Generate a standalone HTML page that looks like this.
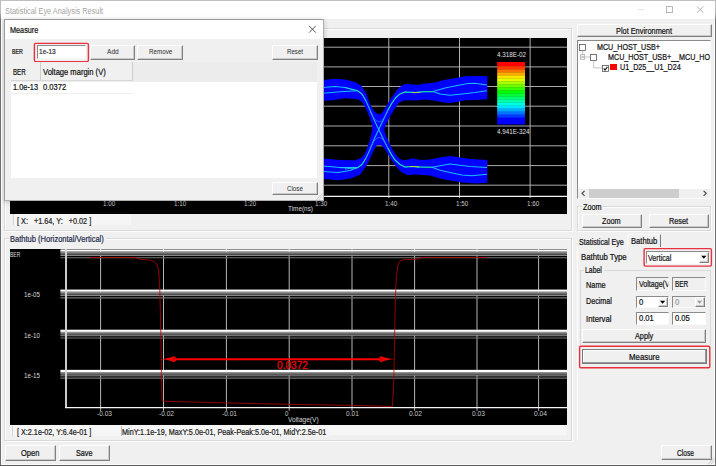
<!DOCTYPE html>
<html lang="en"><head><meta charset="utf-8"><title>Statistical Eye Analysis Result</title>
<style>
html,body{margin:0;padding:0;background:#f0f0f0;}
#win{position:relative;width:716px;height:466px;overflow:hidden;background:#f0f0f0;font-family:"Liberation Sans",sans-serif;}
.a{position:absolute;box-sizing:border-box;}
svg.a{overflow:visible;}
.t{position:absolute;white-space:nowrap;line-height:1;transform-origin:0 50%;-webkit-text-stroke:0.22px currentColor;}
.btn{background:#f0f0f0;border-top:1px solid #fff;border-left:1px solid #fff;border-right:1px solid #808080;border-bottom:1px solid #808080;box-shadow:inset -1px -1px 0 #cbcbcb;}
.dflt{border:1px solid #7a7a7a;box-shadow:inset -1px -1px 0 #9a9a9a, inset 1px 1px 0 #fff;}
.sunk{border-top:1px solid #8a8a8a;border-left:1px solid #8a8a8a;border-right:1px solid #fbfbfb;border-bottom:1px solid #fbfbfb;}
.grp{border:1px solid #d9d9d9;box-shadow:inset 1px 1px 0 #fcfcfc, 1px 1px 0 #fcfcfc;}
.dlg{background:#f0f0f0;border:1px solid #9c9c9c;border-right-color:#b0b0b0;border-bottom-color:#b0b0b0;box-shadow:0 1px 5px rgba(0,0,0,0.22);}
</style></head>
<body><div id="win">
<div class="a" style="left:0.00px;top:0.00px;width:716.00px;height:19.00px;background:#fff"></div>
<span class="t" id="t0" style="left:5.20px;top:5.51px;font-size:9.60px;color:#a4a4a4;transform:scaleX(0.7665);-webkit-text-stroke:0;">Statistical Eye Analysis Result</span>
<svg class="a" style="left:630px;top:0" width="86" height="20" viewBox="630 0 86 20"><line x1="637.5" y1="9.6" x2="644" y2="9.6" stroke="#e2e2e2" stroke-width="0.9"/><rect x="666.6" y="6.6" width="6" height="6" fill="none" stroke="#a8a8a8" stroke-width="0.8"/><path d="M697 6.4 L703.4 12.8 M703.4 6.4 L697 12.8" stroke="#a0a0a0" stroke-width="0.8" fill="none"/></svg>
<div class="a grp" style="left:4.00px;top:28.00px;width:568.00px;height:203.00px;"></div>
<svg class="a" style="left:10px;top:38px" width="557" height="176" viewBox="10 38 557 176"><rect x="10" y="38" width="557" height="176" fill="#000"/><line x1="60" y1="47.20" x2="567" y2="47.20" stroke="#bdbdbd" stroke-width="0.9"/><line x1="60" y1="66.90" x2="567" y2="66.90" stroke="#bdbdbd" stroke-width="0.9"/><line x1="60" y1="86.50" x2="567" y2="86.50" stroke="#bdbdbd" stroke-width="0.9"/><line x1="60" y1="106.20" x2="567" y2="106.20" stroke="#bdbdbd" stroke-width="0.9"/><line x1="60" y1="126.00" x2="567" y2="126.00" stroke="#bdbdbd" stroke-width="0.9"/><line x1="60" y1="145.80" x2="567" y2="145.80" stroke="#bdbdbd" stroke-width="0.9"/><line x1="60" y1="165.60" x2="567" y2="165.60" stroke="#bdbdbd" stroke-width="0.9"/><line x1="60" y1="185.20" x2="567" y2="185.20" stroke="#bdbdbd" stroke-width="0.9"/><line x1="106.40" y1="38" x2="106.40" y2="198" stroke="#c4c4c4" stroke-width="0.9"/><line x1="177.00" y1="38" x2="177.00" y2="198" stroke="#c4c4c4" stroke-width="0.9"/><line x1="247.60" y1="38" x2="247.60" y2="198" stroke="#c4c4c4" stroke-width="0.9"/><line x1="318.20" y1="38" x2="318.20" y2="198" stroke="#c4c4c4" stroke-width="0.9"/><line x1="388.80" y1="38" x2="388.80" y2="198" stroke="#c4c4c4" stroke-width="0.9"/><line x1="459.50" y1="38" x2="459.50" y2="198" stroke="#c4c4c4" stroke-width="0.9"/><line x1="530.10" y1="38" x2="530.10" y2="198" stroke="#c4c4c4" stroke-width="0.9"/><line x1="60" y1="196.3" x2="567" y2="196.3" stroke="#f4f4f4" stroke-width="1.2"/><line x1="65.5" y1="38" x2="65.5" y2="197" stroke="#f4f4f4" stroke-width="1.4"/><path d="M300.0 80.3 L323.0 80.0 L336.0 78.8 L345.0 79.4 L355.0 82.0 L361.5 85.7 L366.5 93.9 L370.0 104.0 L374.0 111.0 L377.0 113.6 L379.2 114.3 L381.5 113.4 L384.0 110.0 L389.0 101.4 L394.0 94.0 L399.0 87.6 L402.0 85.6 L405.0 84.0 L411.3 84.2 L416.4 85.0 L425.0 83.6 L435.0 82.6 L444.0 80.0 L454.0 78.2 L465.4 76.3 L475.5 76.0 L487.3 76.3 L487.3 99.2 L475.5 100.0 L465.4 100.2 L456.6 102.0 L450.3 103.0 L444.0 102.5 L435.2 100.8 L425.2 99.6 L416.4 100.4 L408.8 100.2 L403.0 100.6 L398.5 103.3 L394.0 110.0 L389.5 117.5 L385.6 125.5 L384.3 129.5 L385.4 134.3 L388.6 141.8 L393.0 150.6 L398.0 157.6 L402.5 160.3 L406.3 159.9 L412.6 158.2 L420.0 159.9 L430.0 159.5 L440.0 157.6 L450.3 156.1 L460.4 157.6 L470.4 159.1 L487.3 159.9 L487.3 182.8 L475.5 183.4 L463.0 182.5 L450.3 180.5 L440.0 178.4 L430.0 175.5 L415.0 174.4 L407.5 175.3 L400.5 171.4 L395.5 165.7 L390.4 158.2 L385.4 150.0 L382.3 145.8 L379.2 144.4 L376.6 145.6 L374.0 150.0 L370.3 158.2 L366.5 165.7 L360.3 174.5 L351.4 178.3 L339.0 180.2 L323.0 179.0 L300.0 179.0 L300.0 158.2 L323.0 158.2 L339.0 160.0 L355.0 160.3 L361.0 158.0 L364.0 155.0 L366.3 150.5 L369.3 142.0 L372.3 129.5 L372.3 125.0 L368.5 114.5 L364.8 106.3 L361.5 101.4 L358.0 99.3 L345.0 98.3 L332.6 100.2 L323.0 100.8 L300.0 100.8 Z" fill="#0000ff"/><polyline points="300.0,88.0 323.0,87.6 335.0,86.5 345.0,87.5 357.7,90.8" fill="none" stroke="#1cbcff" stroke-width="1.05" stroke-opacity="1.00" stroke-linejoin="round"/><polyline points="300.0,94.0 323.0,93.3 340.0,91.8 357.7,90.8" fill="none" stroke="#1cbcff" stroke-width="1.05" stroke-opacity="1.00" stroke-linejoin="round"/><polyline points="357.7,90.8 362.0,94.0 366.0,101.0 370.0,110.0 374.0,119.5 378.7,129.5 383.0,138.5 387.0,146.5 391.0,154.0 395.0,160.0 400.0,164.5 405.0,167.0 412.0,166.4 420.0,167.0 432.0,167.3" fill="none" stroke="#1cbcff" stroke-width="1.05" stroke-opacity="1.00" stroke-linejoin="round"/><polyline points="357.7,167.6 362.0,164.5 366.0,158.0 370.0,149.5 374.0,139.5 378.7,129.5 383.0,120.5 387.0,112.0 391.0,104.5 395.0,98.5 400.0,93.9 405.0,92.0 416.0,92.6 425.0,91.6 433.0,91.6" fill="none" stroke="#1cbcff" stroke-width="1.05" stroke-opacity="1.00" stroke-linejoin="round"/><polyline points="300.0,166.0 323.0,166.1 340.0,167.6 357.7,167.6" fill="none" stroke="#1cbcff" stroke-width="1.05" stroke-opacity="1.00" stroke-linejoin="round"/><polyline points="300.0,171.6 323.0,171.4 338.0,172.6 350.0,170.5 357.7,167.6" fill="none" stroke="#1cbcff" stroke-width="1.05" stroke-opacity="1.00" stroke-linejoin="round"/><polyline points="370.0,112.0 374.0,118.5 377.0,121.2 379.2,121.8 381.5,121.0 384.0,118.0 388.0,111.0" fill="none" stroke="#2f7dff" stroke-width="0.80" stroke-opacity="1.00" stroke-linejoin="round"/><polyline points="370.0,148.0 374.0,141.0 377.0,138.2 379.2,137.5 381.5,138.2 384.0,141.0 388.0,148.0" fill="none" stroke="#2f7dff" stroke-width="0.80" stroke-opacity="1.00" stroke-linejoin="round"/><polyline points="433.0,91.6 444.0,88.2 456.0,85.7 468.0,83.6 475.0,83.3 487.0,85.0" fill="none" stroke="#1cbcff" stroke-width="1.05" stroke-opacity="1.00" stroke-linejoin="round"/><polyline points="433.0,91.6 440.0,93.9 450.0,95.2 462.0,93.9 475.0,92.6 487.0,90.8" fill="none" stroke="#1cbcff" stroke-width="1.05" stroke-opacity="1.00" stroke-linejoin="round"/><polyline points="432.0,167.3 440.0,165.8 450.0,163.9 460.0,165.2 470.0,166.4 487.0,167.4" fill="none" stroke="#1cbcff" stroke-width="1.05" stroke-opacity="1.00" stroke-linejoin="round"/><polyline points="432.0,167.3 440.0,170.2 450.0,172.5 462.0,175.0 472.0,175.8 487.0,174.2" fill="none" stroke="#1cbcff" stroke-width="1.05" stroke-opacity="1.00" stroke-linejoin="round"/><polyline points="388.0,110.0 391.0,104.5 395.0,98.5 400.0,93.9 405.0,92.0 416.0,92.6 425.0,91.6 433.0,91.6" fill="none" stroke="#19e08a" stroke-width="0.90" stroke-opacity="1.00" stroke-linejoin="round"/><polyline points="412.0,92.4 416.0,92.6 420.0,92.2" fill="none" stroke="#c8e030" stroke-width="0.80" stroke-opacity="1.00" stroke-linejoin="round"/><polyline points="388.0,148.0 391.0,154.0 395.0,160.0 400.0,164.5 405.0,167.0 412.0,166.4 420.0,167.0 432.0,167.3" fill="none" stroke="#19e08a" stroke-width="0.90" stroke-opacity="1.00" stroke-linejoin="round"/><polyline points="410.0,166.5 414.0,166.5 419.0,167.0" fill="none" stroke="#c8e030" stroke-width="0.80" stroke-opacity="1.00" stroke-linejoin="round"/><polyline points="345.0,87.5 357.7,90.8 362.0,94.0 366.0,101.0" fill="none" stroke="#19e0b0" stroke-width="0.80" stroke-opacity="1.00" stroke-linejoin="round"/><polyline points="345.0,169.0 357.7,167.6 362.0,164.5 366.0,158.0" fill="none" stroke="#19e0b0" stroke-width="0.80" stroke-opacity="1.00" stroke-linejoin="round"/><rect x="497.2" y="62.00" width="27.8" height="4.70" fill="rgb(255,0,0)"/><rect x="497.2" y="66.40" width="27.8" height="3.31" fill="rgb(255,59,0)"/><rect x="497.2" y="69.41" width="27.8" height="3.31" fill="rgb(255,115,0)"/><rect x="497.2" y="72.42" width="27.8" height="3.31" fill="rgb(255,172,0)"/><rect x="497.2" y="75.44" width="27.8" height="3.31" fill="rgb(255,228,0)"/><rect x="497.2" y="78.45" width="27.8" height="3.31" fill="rgb(225,255,0)"/><rect x="497.2" y="81.46" width="27.8" height="3.31" fill="rgb(168,255,0)"/><rect x="497.2" y="84.47" width="27.8" height="3.31" fill="rgb(112,255,0)"/><rect x="497.2" y="87.48" width="27.8" height="3.31" fill="rgb(56,255,0)"/><rect x="497.2" y="90.49" width="27.8" height="3.31" fill="rgb(0,255,0)"/><rect x="497.2" y="93.51" width="27.8" height="3.31" fill="rgb(0,255,56)"/><rect x="497.2" y="96.52" width="27.8" height="3.31" fill="rgb(0,255,112)"/><rect x="497.2" y="99.53" width="27.8" height="3.31" fill="rgb(0,255,168)"/><rect x="497.2" y="102.54" width="27.8" height="3.31" fill="rgb(0,255,225)"/><rect x="497.2" y="105.55" width="27.8" height="3.31" fill="rgb(0,228,255)"/><rect x="497.2" y="108.56" width="27.8" height="3.31" fill="rgb(0,172,255)"/><rect x="497.2" y="111.58" width="27.8" height="3.31" fill="rgb(0,115,255)"/><rect x="497.2" y="114.59" width="27.8" height="3.31" fill="rgb(0,59,255)"/><rect x="497.2" y="117.60" width="27.8" height="6.90" fill="rgb(0,0,255)"/></svg>
<span class="t" id="t1" style="left:102.90px;top:200.62px;font-size:6.70px;color:#c6c6c6;transform:scaleX(0.9362);-webkit-text-stroke:0;">1:00</span>
<span class="t" id="t2" style="left:173.90px;top:200.62px;font-size:6.70px;color:#c6c6c6;transform:scaleX(0.9362);-webkit-text-stroke:0;">1:10</span>
<span class="t" id="t3" style="left:244.20px;top:200.62px;font-size:6.70px;color:#c6c6c6;transform:scaleX(0.9362);-webkit-text-stroke:0;">1:20</span>
<span class="t" id="t4" style="left:314.90px;top:200.62px;font-size:6.70px;color:#c6c6c6;transform:scaleX(0.9362);-webkit-text-stroke:0;">1:30</span>
<span class="t" id="t5" style="left:385.40px;top:200.62px;font-size:6.70px;color:#c6c6c6;transform:scaleX(0.9362);-webkit-text-stroke:0;">1:40</span>
<span class="t" id="t6" style="left:455.90px;top:200.62px;font-size:6.70px;color:#c6c6c6;transform:scaleX(0.9362);-webkit-text-stroke:0;">1:50</span>
<span class="t" id="t7" style="left:526.90px;top:200.62px;font-size:6.70px;color:#c6c6c6;transform:scaleX(0.9362);-webkit-text-stroke:0;">1:60</span>
<span class="t" id="t8" style="left:288.40px;top:204.96px;font-size:7.20px;color:#d8d8d8;transform:scaleX(0.8899);-webkit-text-stroke:0;">Time(ns)</span>
<span class="t" id="t9" style="left:497.20px;top:51.66px;font-size:6.80px;color:#e2e2e2;transform:scaleX(0.9243);-webkit-text-stroke:0;">4.318E-02</span>
<span class="t" id="t10" style="left:497.20px;top:129.36px;font-size:6.80px;color:#e2e2e2;transform:scaleX(0.9216);-webkit-text-stroke:0;">4.941E-324</span>
<div class="a" style="left:12.60px;top:214.00px;width:118.40px;height:10.60px;background:#f5f5f5;border-left:1px solid #d4d4d4;"></div>
<span class="t" id="t11" style="left:17.00px;top:216.93px;font-size:8.60px;color:#222;transform:scaleX(0.8456);white-space:pre;">[ X:   +1.64, Y:   +0.02 ]</span>
<div class="a grp" style="left:4.00px;top:238.00px;width:568.00px;height:203.00px;"></div>
<div class="a" style="left:8.50px;top:233.00px;width:97.50px;height:12.00px;background:#f0f0f0"></div>
<span class="t" id="t12" style="left:10.20px;top:234.92px;font-size:8.80px;color:#1c2a4a;transform:scaleX(0.8564);">Bathtub (Horizontal/Vertical)</span>
<svg class="a" style="left:10px;top:249px" width="557" height="176" viewBox="10 249 557 176"><defs><linearGradient id="bg" x1="0" y1="0" x2="0" y2="1"><stop offset="0" stop-color="#a0a0a0"/><stop offset="1" stop-color="#3c3c3c"/></linearGradient></defs><rect x="10" y="249" width="557" height="176" fill="#000"/><line x1="100.60" y1="249" x2="100.60" y2="410.8" stroke="#cacaca" stroke-width="0.9"/><line x1="163.50" y1="249" x2="163.50" y2="410.8" stroke="#cacaca" stroke-width="0.9"/><line x1="226.40" y1="249" x2="226.40" y2="410.8" stroke="#cacaca" stroke-width="0.9"/><line x1="289.20" y1="249" x2="289.20" y2="410.8" stroke="#cacaca" stroke-width="0.9"/><line x1="352.00" y1="249" x2="352.00" y2="410.8" stroke="#cacaca" stroke-width="0.9"/><line x1="414.60" y1="249" x2="414.60" y2="410.8" stroke="#cacaca" stroke-width="0.9"/><line x1="477.00" y1="249" x2="477.00" y2="410.8" stroke="#cacaca" stroke-width="0.9"/><line x1="538.60" y1="249" x2="538.60" y2="410.8" stroke="#cacaca" stroke-width="0.9"/><rect x="60.4" y="249.45" width="506.6" height="2.2" fill="#fff"/><rect x="60.4" y="251.65" width="506.6" height="3.3" fill="url(#bg)"/><line x1="60.4" y1="255.45" x2="567" y2="255.45" stroke="#929292" stroke-width="1"/><line x1="60.4" y1="257.75" x2="567" y2="257.75" stroke="#747474" stroke-width="1.2"/><rect x="60.4" y="289.58" width="506.6" height="2.2" fill="#fff"/><rect x="60.4" y="291.78" width="506.6" height="3.3" fill="url(#bg)"/><line x1="60.4" y1="295.58" x2="567" y2="295.58" stroke="#929292" stroke-width="1"/><line x1="60.4" y1="297.88" x2="567" y2="297.88" stroke="#747474" stroke-width="1.2"/><rect x="60.4" y="329.71" width="506.6" height="2.2" fill="#fff"/><rect x="60.4" y="331.91" width="506.6" height="3.3" fill="url(#bg)"/><line x1="60.4" y1="335.71" x2="567" y2="335.71" stroke="#929292" stroke-width="1"/><line x1="60.4" y1="338.01" x2="567" y2="338.01" stroke="#747474" stroke-width="1.2"/><rect x="60.4" y="369.84" width="506.6" height="2.2" fill="#fff"/><rect x="60.4" y="372.04" width="506.6" height="3.3" fill="url(#bg)"/><line x1="60.4" y1="375.84" x2="567" y2="375.84" stroke="#929292" stroke-width="1"/><line x1="60.4" y1="378.14" x2="567" y2="378.14" stroke="#747474" stroke-width="1.2"/><line x1="66" y1="249" x2="66" y2="408" stroke="#d4d4d4" stroke-width="1.9"/><line x1="65" y1="407.6" x2="567" y2="407.6" stroke="#f4f4f4" stroke-width="1.2"/><polyline points="90.0,257.5 135.0,257.5 140.0,259.3 150.0,260.0 154.0,261.5 157.3,265.0 158.8,272.0 159.8,290.0 160.8,330.0 161.5,380.0 162.0,400.8 164.2,401.2 230.0,403.0 289.0,404.3 350.0,405.3 390.0,406.4 392.5,406.0 393.8,380.0 394.5,340.0 395.3,300.0 396.5,275.0 398.0,265.0 400.0,261.0 404.0,259.6 417.5,259.2 421.0,257.5 487.0,257.5" fill="none" stroke="#b80000" stroke-width="0.80" stroke-opacity="1.00" stroke-linejoin="round"/><line x1="174" y1="359.2" x2="381" y2="359.2" stroke="#ff0000" stroke-width="2.1"/><path d="M160.8 359.2 L166 358.6 L173.6 356.8 L173.6 361.6 L166 359.8 Z" fill="#ff0000"/><ellipse cx="173.8" cy="359.2" rx="1.9" ry="2.6" fill="#d00000" stroke="#ff0000" stroke-width="0.8"/><path d="M394.2 359.2 L389 358.6 L381.4 356.8 L381.4 361.6 L389 359.8 Z" fill="#ff0000"/><ellipse cx="381.2" cy="359.2" rx="1.9" ry="2.6" fill="#d00000" stroke="#ff0000" stroke-width="0.8"/></svg>
<span class="t" id="t13" style="left:10.20px;top:250.86px;font-size:7.00px;color:#d8d8d8;transform:scaleX(0.7219);-webkit-text-stroke:0;">BER</span>
<span class="t" id="t14" style="left:24.30px;top:291.91px;font-size:6.90px;color:#d8d8d8;transform:scaleX(0.9021);-webkit-text-stroke:0;">1e-05</span>
<span class="t" id="t15" style="left:24.30px;top:332.51px;font-size:6.90px;color:#d8d8d8;transform:scaleX(0.9021);-webkit-text-stroke:0;">1e-10</span>
<span class="t" id="t16" style="left:24.30px;top:372.81px;font-size:6.90px;color:#d8d8d8;transform:scaleX(0.9021);-webkit-text-stroke:0;">1e-15</span>
<span class="t" id="t17" style="left:96.50px;top:411.12px;font-size:6.70px;color:#c6c6c6;transform:scaleX(0.9836);-webkit-text-stroke:0;">-0.03</span>
<span class="t" id="t18" style="left:159.00px;top:411.12px;font-size:6.70px;color:#c6c6c6;transform:scaleX(0.9836);-webkit-text-stroke:0;">-0.02</span>
<span class="t" id="t19" style="left:221.80px;top:411.12px;font-size:6.70px;color:#c6c6c6;transform:scaleX(0.9836);-webkit-text-stroke:0;">-0.01</span>
<span class="t" id="t20" style="left:284.60px;top:411.12px;font-size:6.70px;color:#c6c6c6;transform:scaleX(0.9105);-webkit-text-stroke:0;">0</span>
<span class="t" id="t21" style="left:346.20px;top:411.12px;font-size:6.70px;color:#c6c6c6;transform:scaleX(0.9823);-webkit-text-stroke:0;">0.01</span>
<span class="t" id="t22" style="left:409.00px;top:411.12px;font-size:6.70px;color:#c6c6c6;transform:scaleX(0.9976);-webkit-text-stroke:0;">0.02</span>
<span class="t" id="t23" style="left:471.60px;top:411.12px;font-size:6.70px;color:#c6c6c6;transform:scaleX(0.9976);-webkit-text-stroke:0;">0.03</span>
<span class="t" id="t24" style="left:534.20px;top:411.12px;font-size:6.70px;color:#c6c6c6;transform:scaleX(0.9976);-webkit-text-stroke:0;">0.04</span>
<span class="t" id="t25" style="left:288.20px;top:416.46px;font-size:7.20px;color:#d8d8d8;transform:scaleX(0.9117);-webkit-text-stroke:0;">Voltage(V)</span>
<span class="t" id="t26" style="left:277.00px;top:359.68px;font-size:11.00px;color:#ff0000;transform:scaleX(0.9211);">0.0372</span>
<div class="a" style="left:10.00px;top:425.00px;width:557.00px;height:9.50px;background:#f6f6f6"></div>
<div class="a" style="left:12.00px;top:426.00px;width:108.00px;height:9.60px;background:#f6f6f6;border-left:1px solid #d4d4d4;"></div>
<div class="a" style="left:121.00px;top:426.00px;width:209.00px;height:9.60px;background:#f6f6f6;border-left:1px solid #bcbcbc;"></div>
<span class="t" id="t27" style="left:17.00px;top:427.93px;font-size:8.60px;color:#222;transform:scaleX(0.8409);">[ X:2.1e-02, Y:6.4e-01 ]</span>
<span class="t" id="t28" style="left:122.30px;top:427.93px;font-size:8.60px;color:#222;transform:scaleX(0.8431);">MinY:1.1e-19, MaxY:5.0e-01, Peak-Peak:5.0e-01, MidY:2.5e-01</span>
<div class="a btn" style="left:4.60px;top:444.70px;width:51.00px;height:16.30px;"></div><span class="t" id="t29" style="left:21.00px;top:449.13px;font-size:8.60px;color:#111;transform:scaleX(0.8701);">Open</span>
<div class="a btn" style="left:59.00px;top:444.70px;width:51.00px;height:16.30px;"></div><span class="t" id="t30" style="left:76.20px;top:449.13px;font-size:8.60px;color:#111;transform:scaleX(0.8421);">Save</span>
<div class="a btn" style="left:660.50px;top:444.70px;width:51.10px;height:15.70px;"></div><span class="t" id="t31" style="left:677.30px;top:448.53px;font-size:8.60px;color:#111;transform:scaleX(0.7687);">Close</span>
<div class="a btn" style="left:577.00px;top:23.80px;width:134.60px;height:13.00px;"></div><span class="t" id="t32" style="left:615.70px;top:27.13px;font-size:8.60px;color:#111;transform:scaleX(0.8556);">Plot Environment</span>
<div class="a sunk" style="left:577.00px;top:40.20px;width:134.30px;height:158.60px;background:#fff"></div>
<svg class="a" style="left:579.1px;top:44.1px" width="8" height="8" viewBox="0 0 8 8"><rect x="0.5" y="0.5" width="6.0" height="6.0" fill="#fff" stroke="#555" stroke-width="0.8"/></svg>
<span class="t" id="t33" style="left:597.00px;top:42.78px;font-size:8.70px;color:#111;transform:scaleX(0.8232);">MCU_HOST_USB+</span>
<svg class="a" style="left:578px;top:50px" width="30" height="22" viewBox="578 50 30 22"><path d="M582.6 50.6 V54.6 M584.8 57 H590.6 M593.7 61 V67.9 H602" stroke="#b4b4b4" stroke-width="0.8" fill="none"/><rect x="580.5" y="54.8" width="4.2" height="4.4" fill="#fff" stroke="#9a9a9a" stroke-width="0.7"/><line x1="581.5" y1="57" x2="583.8" y2="57" stroke="#555" stroke-width="0.7"/></svg>
<svg class="a" style="left:590.2px;top:54.4px" width="8" height="8" viewBox="0 0 8 8"><rect x="0.5" y="0.5" width="6.0" height="6.0" fill="#fff" stroke="#555" stroke-width="0.8"/></svg>
<span class="t" id="t34" style="left:608.40px;top:52.98px;font-size:8.70px;color:#111;transform:scaleX(0.8245);">MCU_HOST_USB+__MCU_HO</span>
<svg class="a" style="left:601.5px;top:64.8px" width="8" height="8" viewBox="0 0 8 8"><rect x="0.5" y="0.5" width="6.0" height="6.0" fill="#fff" stroke="#555" stroke-width="0.8"/><path d="M1.7 3.4 L3 5 L5.4 1.8" stroke="#111" stroke-width="1.1" fill="none"/></svg>
<div class="a" style="left:609.70px;top:63.60px;width:6.90px;height:6.80px;background:#ff0000"></div>
<span class="t" id="t35" style="left:620.00px;top:63.28px;font-size:8.70px;color:#111;transform:scaleX(0.8267);">U1_D25__U1_D24</span>
<div class="a" style="left:578.00px;top:188.50px;width:132.30px;height:9.50px;background:#f0f0f0"></div>
<div class="a" style="left:589.00px;top:188.50px;width:89.70px;height:9.50px;background:#cdcdcd"></div>
<svg class="a" style="left:578px;top:188px" width="133" height="11" viewBox="578 188 133 11"><path d="M584.6 190.8 L582 193.3 L584.6 195.8" stroke="#444" stroke-width="1.15" fill="none"/><path d="M703.6 190.8 L706.2 193.3 L703.6 195.8" stroke="#444" stroke-width="1.15" fill="none"/></svg>
<div class="a grp" style="left:577.20px;top:206.30px;width:133.80px;height:25.20px;"></div>
<div class="a" style="left:581.50px;top:201.00px;width:21.50px;height:11.00px;background:#f0f0f0"></div>
<span class="t" id="t36" style="left:583.00px;top:202.78px;font-size:8.70px;color:#111;transform:scaleX(0.8326);">Zoom</span>
<div class="a btn" style="left:581.80px;top:214.20px;width:60.70px;height:13.80px;"></div><span class="t" id="t37" style="left:602.40px;top:217.13px;font-size:8.60px;color:#111;transform:scaleX(0.8467);">Zoom</span>
<div class="a btn" style="left:648.90px;top:214.20px;width:60.40px;height:13.80px;"></div><span class="t" id="t38" style="left:669.00px;top:217.13px;font-size:8.60px;color:#111;transform:scaleX(0.8462);">Reset</span>
<div class="a" style="left:576.50px;top:246.50px;width:135.00px;height:193.50px;border-left:1px solid #fff;"></div>
<div class="a" style="left:627.30px;top:234.40px;width:33.90px;height:12.60px;background:#f0f0f0;border-left:1px solid #fafafa;border-top:1px solid #fafafa;border-right:1px solid #7a7a7a;"></div>
<span class="t" id="t39" style="left:579.20px;top:237.98px;font-size:8.70px;color:#111;transform:scaleX(0.8211);">Statistical Eye</span>
<span class="t" id="t40" style="left:630.60px;top:236.98px;font-size:8.70px;color:#111;transform:scaleX(0.8747);">Bathtub</span>
<span class="t" id="t41" style="left:581.30px;top:252.78px;font-size:8.70px;color:#111;transform:scaleX(0.8953);">Bathtub Type</span>
<div class="a sunk" style="left:646.00px;top:250.60px;width:64.00px;height:13.20px;background:#fff"></div>
<div class="a btn" style="left:698.80px;top:251.80px;width:10.20px;height:11.20px;background:#f5f5f5"></div>
<svg class="a" style="left:699px;top:253px" width="10" height="9" viewBox="699 253 10 9"><path d="M701.2 255.8 H706.4 L703.8 258.7 Z" fill="#000"/></svg>
<span class="t" id="t42" style="left:648.20px;top:253.58px;font-size:8.70px;color:#111;transform:scaleX(0.8175);">Vertical</span>
<svg class="a" style="left:640px;top:245px" width="76" height="25" viewBox="640 245 76 25"><rect x="644.1" y="248.6" width="67.3" height="17.5" rx="1.3" fill="none" stroke="#ea303c" stroke-width="1.4"/></svg>
<div class="a grp" style="left:579.50px;top:270.00px;width:131.50px;height:75.00px;border-bottom:none;box-shadow:none"></div>
<div class="a" style="left:583.50px;top:264.50px;width:20.00px;height:11.50px;background:#f0f0f0"></div>
<span class="t" id="t43" style="left:585.00px;top:266.38px;font-size:8.70px;color:#111;transform:scaleX(0.7900);">Label</span>
<span class="t" id="t44" style="left:585.70px;top:280.68px;font-size:8.70px;color:#111;transform:scaleX(0.8453);">Name</span>
<span class="t" id="t45" style="left:585.70px;top:296.98px;font-size:8.70px;color:#111;transform:scaleX(0.8219);">Decimal</span>
<span class="t" id="t46" style="left:585.70px;top:314.98px;font-size:8.70px;color:#111;transform:scaleX(0.8947);">Interval</span>
<div class="a sunk" style="left:636.30px;top:277.40px;width:32.30px;height:13.60px;background:#f0f0f0;overflow:hidden"></div>
<span class="t" id="t47" style="left:638.80px;top:279.68px;font-size:8.70px;color:#111;transform:scaleX(0.8146);clip-path:inset(-2px 1.6px -2px 0);">Voltage(V</span>
<div class="a sunk" style="left:672.20px;top:277.40px;width:33.40px;height:13.60px;background:#f0f0f0"></div>
<span class="t" id="t48" style="left:675.00px;top:279.68px;font-size:8.70px;color:#111;transform:scaleX(0.7385);">BER</span>
<div class="a sunk" style="left:636.30px;top:296.00px;width:32.30px;height:12.20px;background:#fff"></div>
<div class="a btn" style="left:657.80px;top:297.20px;width:10.00px;height:10.10px;background:#f5f5f5"></div>
<svg class="a" style="left:658px;top:298px" width="10" height="9" viewBox="658 298 10 9"><path d="M660 300.8 H665.2 L662.6 303.7 Z" fill="#000"/></svg>
<span class="t" id="t49" style="left:639.20px;top:297.88px;font-size:8.70px;color:#111;transform:scaleX(0.8877);">0</span>
<div class="a sunk" style="left:672.20px;top:296.00px;width:33.40px;height:12.20px;background:#f0f0f0"></div>
<div class="a btn" style="left:694.80px;top:297.20px;width:10.00px;height:10.10px;background:#f2f2f2"></div>
<svg class="a" style="left:695px;top:298px" width="10" height="9" viewBox="695 298 10 9"><path d="M697 300.8 H702.2 L699.6 303.7 Z" fill="#9a9a9a"/></svg>
<span class="t" id="t50" style="left:675.20px;top:297.88px;font-size:8.70px;color:#9a9a9a;transform:scaleX(0.8877);">0</span>
<div class="a sunk" style="left:636.30px;top:311.90px;width:32.30px;height:13.50px;background:#fff"></div>
<span class="t" id="t51" style="left:639.00px;top:313.68px;font-size:8.70px;color:#111;transform:scaleX(0.8628);">0.01</span>
<div class="a sunk" style="left:672.20px;top:311.90px;width:33.40px;height:13.50px;background:#fff"></div>
<span class="t" id="t52" style="left:675.20px;top:313.68px;font-size:8.70px;color:#111;transform:scaleX(0.8746);">0.05</span>
<div class="a btn" style="left:582.40px;top:329.40px;width:124.10px;height:13.80px;"></div><span class="t" id="t53" style="left:635.20px;top:332.43px;font-size:8.60px;color:#111;transform:scaleX(0.8465);">Apply</span>
<div class="a btn dflt" style="left:581.60px;top:349.00px;width:125.30px;height:14.80px;"></div><span class="t" id="t54" style="left:628.70px;top:352.53px;font-size:8.60px;color:#111;transform:scaleX(0.9121);">Measure</span>
<svg class="a" style="left:575px;top:343px" width="141" height="28" viewBox="575 343 141 28"><rect x="579.6" y="346.3" width="130.2" height="21.4" rx="1.3" fill="none" stroke="#ea303c" stroke-width="1.4"/></svg>
<div class="a dlg" style="left:4.00px;top:19.00px;width:319.60px;height:181.80px;"></div><div class="a" style="left:5.00px;top:20.00px;width:317.60px;height:19.00px;background:#fff"></div><span class="t" id="t55" style="left:10.00px;top:25.52px;font-size:9.20px;color:#111;transform:scaleX(0.7916);">Measure</span><svg class="a" style="left:305px;top:23px" width="14" height="13" viewBox="305 23 14 13"><path d="M309.1 25.9 L315.8 32.6 M315.8 25.9 L309.1 32.6" stroke="#2a2a2a" stroke-width="0.8" fill="none"/></svg><span class="t" id="t56" style="left:11.70px;top:47.95px;font-size:7.40px;color:#111;transform:scaleX(0.7170);">BER</span><div class="a sunk" style="left:36.60px;top:45.00px;width:49.80px;height:14.20px;background:#fff"></div><span class="t" id="t57" style="left:38.70px;top:47.60px;font-size:7.50px;color:#333;transform:scaleX(0.8704);">1e-13</span><svg class="a" style="left:30px;top:40px" width="64" height="26" viewBox="30 40 64 26"><rect x="34.4" y="43.4" width="54" height="18.2" rx="1.3" fill="none" stroke="#ea303c" stroke-width="1.4"/></svg><div class="a btn" style="left:89.60px;top:45.40px;width:45.60px;height:14.30px;"></div><span class="t" id="t58" style="left:106.50px;top:48.44px;font-size:8.00px;color:#2a2a2a;transform:scaleX(0.8220);-webkit-text-stroke:0;">Add</span><div class="a btn" style="left:137.20px;top:45.40px;width:45.40px;height:14.30px;"></div><span class="t" id="t59" style="left:148.70px;top:48.44px;font-size:8.00px;color:#2a2a2a;transform:scaleX(0.7820);-webkit-text-stroke:0;">Remove</span><div class="a btn" style="left:272.40px;top:45.40px;width:45.20px;height:14.30px;"></div><span class="t" id="t60" style="left:287.00px;top:48.44px;font-size:8.00px;color:#2a2a2a;transform:scaleX(0.7653);-webkit-text-stroke:0;">Reset</span><div class="a" style="left:11.00px;top:62.40px;width:306.30px;height:115.80px;background:#fff"></div><div class="a" style="left:11.00px;top:62.40px;width:306.30px;height:19.20px;background:#ececec"></div><div class="a" style="left:11.00px;top:62.40px;width:30.30px;height:18.60px;background:#f0f0f0;border-right:1px solid #cfcfcf;border-bottom:1px solid #d8d8d8;"></div><div class="a" style="left:41.30px;top:62.40px;width:91.30px;height:18.60px;background:#f0f0f0;border-right:1px solid #cfcfcf;border-bottom:1px solid #d8d8d8;"></div><span class="t" id="t61" style="left:12.50px;top:68.22px;font-size:8.80px;color:#111;transform:scaleX(0.7019);">BER</span><span class="t" id="t62" style="left:42.50px;top:68.22px;font-size:8.80px;color:#111;transform:scaleX(0.8606);">Voltage margin (V)</span><span class="t" id="t63" style="left:12.50px;top:83.12px;font-size:8.80px;color:#111;transform:scaleX(0.8410);">1.0e-13</span><span class="t" id="t64" style="left:42.50px;top:83.12px;font-size:8.80px;color:#111;transform:scaleX(0.8585);">0.0372</span><div class="a" style="left:11.00px;top:93.30px;width:121.60px;height:0.50px;background:#f0f0f0"></div><div class="a btn" style="left:272.40px;top:181.50px;width:45.30px;height:13.80px;"></div><span class="t" id="t65" style="left:286.80px;top:184.64px;font-size:8.00px;color:#2a2a2a;transform:scaleX(0.7774);-webkit-text-stroke:0;">Close</span><svg class="a" style="left:314px;top:192px" width="9" height="9" viewBox="314 192 9 9"><path d="M316 200 L322.4 193.6 M318.6 200 L322.4 196.2" stroke="#bdbdbd" stroke-width="0.7"/></svg>
<div class="a" style="left:1.00px;top:19.50px;width:1.00px;height:445.50px;background:#fbfbfb"></div>
<div class="a" style="left:714.00px;top:19.50px;width:1.00px;height:445.50px;background:#fbfbfb"></div>
<div class="a" style="left:1.00px;top:464.00px;width:714.00px;height:1.00px;background:#fbfbfb"></div>
<div class="a" style="left:0.00px;top:0.00px;width:1.00px;height:466.00px;background:linear-gradient(#bcbcbc 0,#bcbcbc 12px,#6e6e6e 21px,#6e6e6e 100%)"></div>
<div class="a" style="left:715.00px;top:0.00px;width:1.00px;height:466.00px;background:linear-gradient(#bcbcbc 0,#bcbcbc 12px,#6e6e6e 21px,#6e6e6e 100%)"></div>
<div class="a" style="left:0.00px;top:0.00px;width:716.00px;height:1.00px;background:#c0c0c0"></div>
<div class="a" style="left:0.00px;top:465.00px;width:716.00px;height:1.00px;background:#5c5c5c"></div>
<svg class="a" style="left:706px;top:456px" width="9" height="9" viewBox="706 456 9 9"><path d="M708 464.5 L714.5 458 M710.6 464.5 L714.5 460.6" stroke="#b4b4b4" stroke-width="0.7"/></svg>
</div></body></html>
